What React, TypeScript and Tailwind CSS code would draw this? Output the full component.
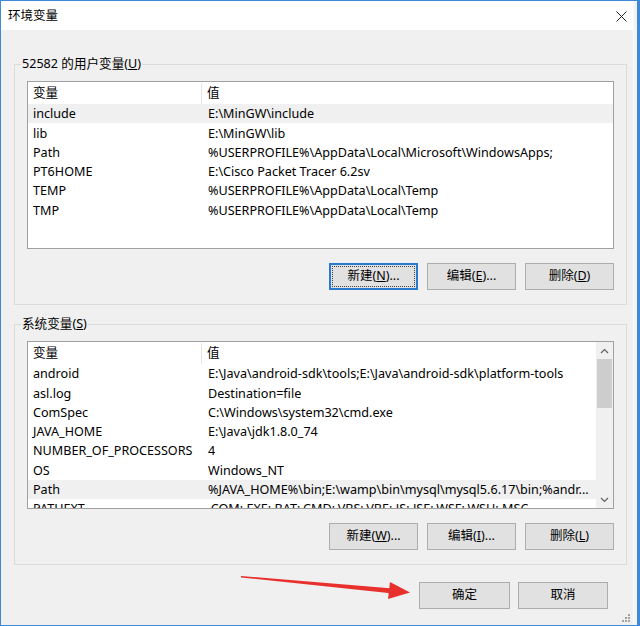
import React from "react";

const userVars: [string, string][] = [
  ["include", "E:\\MinGW\\include"],
  ["lib", "E:\\MinGW\\lib"],
  ["Path", "%USERPROFILE%\\AppData\\Local\\Microsoft\\WindowsApps;"],
  ["PT6HOME", "E:\\Cisco Packet Tracer 6.2sv"],
  ["TEMP", "%USERPROFILE%\\AppData\\Local\\Temp"],
  ["TMP", "%USERPROFILE%\\AppData\\Local\\Temp"],
];

const sysVars: [string, string][] = [
  ["android", "E:\\Java\\android-sdk\\tools;E:\\Java\\android-sdk\\platform-tools"],
  ["asl.log", "Destination=file"],
  ["ComSpec", "C:\\Windows\\system32\\cmd.exe"],
  ["JAVA_HOME", "E:\\Java\\jdk1.8.0_74"],
  ["NUMBER_OF_PROCESSORS", "4"],
  ["OS", "Windows_NT"],
  ["Path", "%JAVA_HOME%\\bin;E:\\wamp\\bin\\mysql\\mysql5.6.17\\bin;%andr..."],
  ["PATHEXT", ".COM;.EXE;.BAT;.CMD;.VBS;.VBE;.JS;.JSE;.WSF;.WSH;.MSC"],
];

function Btn({ label, mn, suffix = "", def = false, w = "w-[89px]" }: { label: string; mn?: string; suffix?: string; def?: boolean; w?: string }) {
  return (
    <div
      className={`relative ${w} h-[27px] flex items-center justify-center bg-[#e1e1e1] text-[12.5px] text-black ${
        def ? "border-2 border-[#2a7bd0]" : "border border-[#adadad]"
      }`}
    >
      {def && <div className="absolute inset-[1px] border border-dotted border-[#444]" />}
      <span>
        {label}
        {mn && (
          <>
            (<u>{mn}</u>)
          </>
        )}
        {suffix}
      </span>
    </div>
  );
}

function ListView({ rows, scroll = false }: { rows: [string, string][]; scroll?: boolean }) {
  return (
    <div className="w-[587px] h-[168px] border border-[#a0a0a0] bg-white flex overflow-hidden">
      <div className="flex-1 flex flex-col overflow-hidden">
        <div className="h-[22px] flex shrink-0 items-center pt-[1px]">
          <div className="w-[174px] pl-[5px] border-r border-[#e5e5e5] h-full flex items-center">变量</div>
          <div className="pl-[5px]">值</div>
        </div>
        {rows.map(([k, v], i) => (
          <div
            key={i}
            className={`h-[19.3px] shrink-0 flex items-center whitespace-nowrap pt-[2px] ${
              (scroll ? i === 6 : i === 0) ? "bg-[#f0f0f0]" : ""
            }`}
          >
            <div className="w-[175px] pl-[5px] overflow-hidden">{k}</div>
            <div className="pl-[5px] overflow-hidden">{v}</div>
          </div>
        ))}
      </div>
      {scroll && (
        <div className="w-[17px] h-full bg-[#f0f0f0] flex flex-col shrink-0">
          <div className="h-[17px] flex items-center justify-center">
            <svg width="9" height="6" viewBox="0 0 9 6">
              <path d="M1 5 L4.5 1.5 L8 5" fill="none" stroke="#606060" strokeWidth="1.2" />
            </svg>
          </div>
          <div className="h-[49px] mx-[1px] bg-[#cdcdcd]" />
          <div className="flex-1" />
          <div className="h-[17px] flex items-center justify-center">
            <svg width="9" height="6" viewBox="0 0 9 6">
              <path d="M1 1 L4.5 4.5 L8 1" fill="none" stroke="#606060" strokeWidth="1.2" />
            </svg>
          </div>
        </div>
      )}
    </div>
  );
}

function Group({ title, mn, rows, scroll, btns }: { title: string; mn: string; rows: [string, string][]; scroll?: boolean; btns: React.ReactNode }) {
  return (
    <div className="relative ml-[13px] w-[613px] h-[241px] border border-[#dcdcdc] px-[12px] pt-[16px]">
      <div className="absolute -top-[10px] left-[6px] px-[1px] bg-[#f0f0f0]">
        {title}(<u>{mn}</u>)
      </div>
      <ListView rows={rows} scroll={scroll} />
      <div className="flex justify-end gap-[9px] mt-[14px]">{btns}</div>
    </div>
  );
}

export default function App() {
  return (
    <div
      className="relative w-[640px] h-[626px] overflow-hidden border-l border-t border-b border-r-[3px] border-[#3d8bd8] bg-[#f0f0f0] flex text-[12.6px] text-black"
      style={{ fontFamily: '"Noto Sans", "Noto Sans CJK SC", sans-serif' }}
    >
      <div className="w-[632px] flex flex-col">
        <div className="h-[29px] bg-white flex items-center justify-between pl-[7px] pr-[6px] pt-[1px] shrink-0">
          <span className="text-[12.5px]">环境变量</span>
          <svg width="11" height="11" viewBox="0 0 11 11">
            <path d="M0.5 0.5 L10.5 10.5 M10.5 0.5 L0.5 10.5" stroke="#222" strokeWidth="1" />
          </svg>
        </div>
        <div className="flex flex-col pt-[34px]">
          <Group
            title="52582 的用户变量"
            mn="U"
            rows={userVars}
            btns={
              <>
                <Btn label="新建" mn="N" suffix="..." def />
                <Btn label="编辑" mn="E" suffix="..." />
                <Btn label="删除" mn="D" />
              </>
            }
          />
          <div className="h-[19px]" />
          <Group
            title="系统变量"
            mn="S"
            rows={sysVars}
            scroll
            btns={
              <>
                <Btn label="新建" mn="W" suffix="..." />
                <Btn label="编辑" mn="I" suffix="..." />
                <Btn label="删除" mn="L" />
              </>
            }
          />
          <div className="flex justify-end gap-[8px] mt-[17px] pr-[25px]">
            <Btn label="确定" w="w-[91px]" />
            <Btn label="取消" w="w-[90px]" />
          </div>
        </div>
      </div>
      <div className="w-[4px] border-l border-[#fafafa] bg-[#f3f3f3]" />
      <svg className="absolute left-0 top-0 pointer-events-none" width="640" height="626">
        <polygon points="240,575 392,587.5 392,592.5 240,576.5" fill="#e8302c" />
        <polygon points="389,581 409,591.5 387,598" fill="#e8302c" />
        <g fill="#a0a0a0">
          <rect x="627" y="613" width="2" height="2" />
          <rect x="624" y="616" width="2" height="2" />
          <rect x="627" y="616" width="2" height="2" />
          <rect x="621" y="619" width="2" height="2" />
          <rect x="624" y="619" width="2" height="2" />
          <rect x="627" y="619" width="2" height="2" />
        </g>
      </svg>
    </div>
  );
}
